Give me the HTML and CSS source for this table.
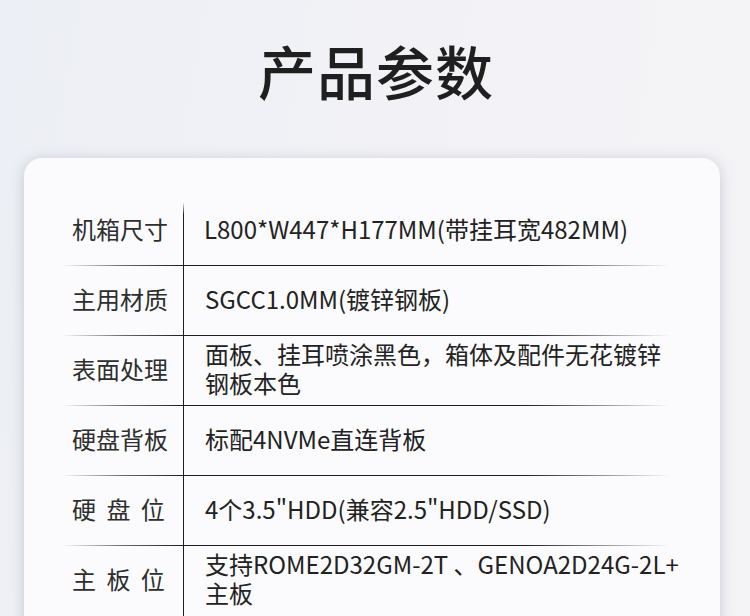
FILE: index.html
```html
<!DOCTYPE html>
<html lang="zh-CN">
<head>
<meta charset="utf-8">
<title>产品参数</title>
<link rel="stylesheet" href="styles.css">
</head>
<body>
<div class="page">
  <h1 class="title">产品参数</h1>
  <div class="card">
    <div class="spec">
      <div class="row first">
        <div class="label">机箱尺寸</div>
        <div class="value">L800*W447*H177MM(带挂耳宽482MM)</div>
      </div>
      <div class="row">
        <div class="label">主用材质</div>
        <div class="value">SGCC1.0MM(镀锌钢板)</div>
      </div>
      <div class="row">
        <div class="label">表面处理</div>
        <div class="value">面板、挂耳喷涂黑色，箱体及配件无花镀锌钢板本色</div>
      </div>
      <div class="row">
        <div class="label">硬盘背板</div>
        <div class="value">标配4NVMe直连背板</div>
      </div>
      <div class="row">
        <div class="label spaced">硬 盘 位</div>
        <div class="value">4个3.5"HDD(兼容2.5"HDD/SSD)</div>
      </div>
      <div class="row last">
        <div class="label spaced">主 板 位</div>
        <div class="value">支持ROME2D32GM-2T 、GENOA2D24G-2L+<wbr>主板</div>
      </div>
    </div>
  </div>
</div>
</body>
</html>
```

FILE: styles.css
```css
html, body {
  margin: 0;
  padding: 0;
}
body {
  width: 750px;
  height: 616px;
  overflow: hidden;
  background: linear-gradient(100deg, #eceff5 0%, #f2f2f6 50%, #f4f4f7 100%);
  font-family: "Noto Sans CJK SC", "Noto Sans", sans-serif;
}
.page {
  display: flex;
  flex-direction: column;
  padding-top: 35px;
}
.title {
  margin: 0;
  text-align: center;
  font-size: 58px;
  line-height: 70px;
  font-weight: 500;
  color: #1f1f1f;
  letter-spacing: 1px;
  padding-left: 2px;
}
.card {
  margin: 53px 30px 0 24px;
  background: #fbfbfd;
  border-radius: 18px;
  box-shadow: 0 2px 14px rgba(120, 124, 140, 0.35);
  padding: 38px 38px 40px 38px;
  min-height: 600px;
}
.spec {
  display: flex;
  flex-direction: column;
}
.row {
  position: relative;
  display: grid;
  grid-template-columns: 121px 1fr;
  height: 70px;
}
.row::after {
  content: "";
  position: absolute;
  left: 0;
  right: 12px;
  bottom: 0;
  height: 1px;
  background: linear-gradient(to right, rgba(34,34,34,0) 0%, #6a6a6a 10%, #1e1e1e 20%, #1e1e1e 76%, #8a8a8a 88%, rgba(34,34,34,0) 100%);
}
.row.last::after {
  display: none;
}
.label {
  display: flex;
  align-items: center;
  padding-left: 10px;
  padding-bottom: 6px;
  font-size: 24px;
  color: #2e2e2e;
}
.label.spaced {
  word-spacing: 5px;
}
.value {
  display: flex;
  align-items: center;
  padding-left: 21px;
  padding-bottom: 6px;
  border-left: 1px solid #1e1e1e;
  font-size: 24px;
  line-height: 29px;
  color: #222;
}
.row.first .value {
  border-left: none;
  position: relative;
}
.row.first .value::before {
  content: "";
  position: absolute;
  left: 0;
  top: 6px;
  bottom: 0;
  width: 1px;
  background: linear-gradient(to bottom, rgba(30,30,30,0) 0%, #1e1e1e 20%, #1e1e1e 100%);
}
```
